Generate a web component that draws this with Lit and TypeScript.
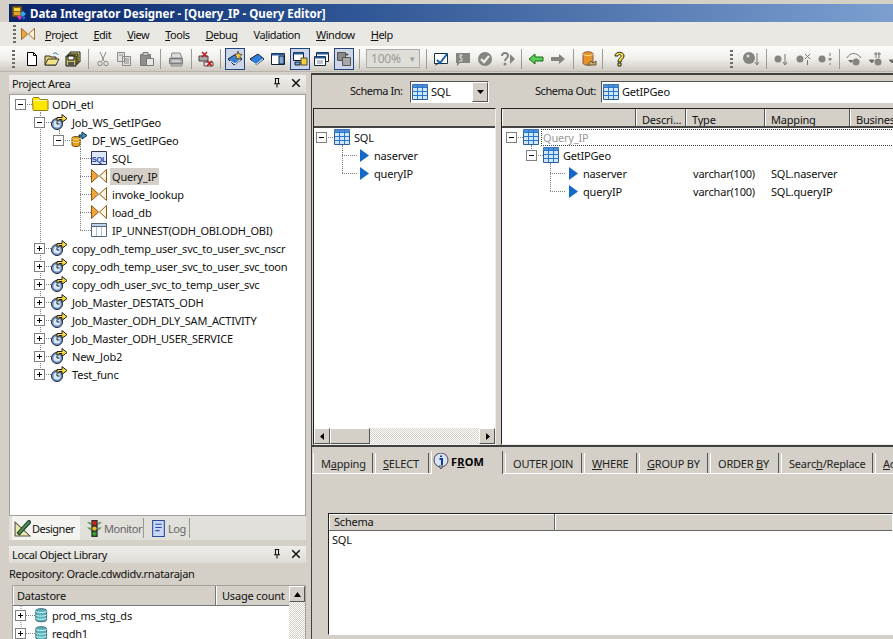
import { LitElement, html, css, svg } from 'lit';
import { customElement } from 'lit/decorators.js';

// small 16x16 icon fragments
const I: Record<string, unknown> = {
  app: svg`<path d="M1 1h10v11H1z" fill="#8a6a20" stroke="#3a2a10"/><path d="M3 3h6v3H3z" fill="#f4d840"/><path d="M3 7h6v3H3z" fill="#e8a020"/><path d="M9 9l3-3 3 3-3 3z" fill="#2fa8e8"/><path d="M6 12l2-2 3 2-2 3z" fill="#d838c8"/><path d="M11 12l2-1 2 2-3 2z" fill="#2a58c8"/>`,
  doc: svg`<path d="M3.500 1.500h6l3 3v10h-9z" fill="#fff" stroke="#000"/><path d="M9.500 1.500v3h3" fill="none" stroke="#000"/>`,
  open: svg`<path d="M1 14V5h5l1 1h5v8z" fill="#e8d070" stroke="#333"/><path d="M1 14l3-6h11l-3 6z" fill="#f4e48c" stroke="#333"/><path d="M9 3c2-2 4-1 5 1" fill="none" stroke="#16a"/>`,
  saveall: svg`<path d="M5 1h10v10H5z" fill="#d8d070" stroke="#222"/><path d="M3 3h10v10H3z" fill="#a09a40" stroke="#222"/><path d="M1 5h10v10H1z" fill="#c8c060" stroke="#111"/><path d="M3 5h6v4H3z" fill="#fff" stroke="#111"/><path d="M3 11h6v4H3z" fill="#555"/>`,
  cut: svg`<path d="M5 1l4 9M11 1L7 10" stroke="#8a8a8a" fill="none"/><circle cx="5" cy="12.500" r="2.200" fill="none" stroke="#8a8a8a"/><circle cx="11" cy="12.500" r="2.200" fill="none" stroke="#8a8a8a"/>`,
  copy: svg`<path d="M1.500 1.500h7v9h-7zM6.500 5.500h8v9h-8z" fill="#e0dfda" stroke="#8a8a8a"/><path d="M8 8h5M8 10h5M8 12h5M3 4h4" stroke="#8a8a8a"/>`,
  paste: svg`<path d="M1.500 3.500h10v11h-10z" fill="#8e8e8a" stroke="#777"/><path d="M4 1.500h5v3H4z" fill="#ccc" stroke="#777"/><path d="M7.500 7.500h7v7h-7z" fill="#e8e8e4" stroke="#777"/>`,
  print: svg`<path d="M4 2h8l2 5H3z" fill="#ddd" stroke="#888"/><path d="M1.500 7.500h13v5h-13z" fill="#aaa" stroke="#777"/><path d="M3 13h11v2H3z" fill="#ccc" stroke="#888"/><path d="M4 10h8" stroke="#eee"/>`,
  del: svg`<path d="M1 5h9v5H1z" fill="#aaa" stroke="#444"/><path d="M6 11h9v4H6z" fill="#ddd" stroke="#555"/><path d="M4 1l5 5M9 1L4 6M9 10l5 5M14 10l-5 5" stroke="#c01818" stroke-width="1.600"/>`,
  star: svg`<path d="M1 8l8-5 6 5-8 6z" fill="#3a7fd0" stroke="#123"/><path d="M3 10l5 3 6-5" fill="none" stroke="#fff"/><path d="M11 0l1 3 3 .5-2 2 .5 3-2.500-1.500-2 1.500.5-3-2-2 3-.5z" fill="#f6d040" stroke="#654"/>`,
  book: svg`<path d="M1 8l8-5 6 5-8 6z" fill="#2f7fd8" stroke="#123"/><path d="M2 10l5 3.500 7-5.500" fill="none" stroke="#fff"/>`,
  win1: svg`<path d="M1.500 2.500h13v11h-13z" fill="#fff" stroke="#123"/><path d="M1.500 2.500h13v2h-13z" fill="#2a5a9a"/><path d="M9 5h5v8H9z" fill="#7fa8d8" stroke="#123"/>`,
  win2: svg`<path d="M1.500 1.500h10v8h-10z" fill="#fff" stroke="#123"/><path d="M1.500 1.500h10v2h-10z" fill="#2a5a9a"/><path d="M9 7h6v7H9z" fill="#f0d040" stroke="#543"/><path d="M3 11h5v3H3z" fill="#7fa8d8" stroke="#123"/>`,
  win3: svg`<path d="M2.500 1.500h12v9h-12z" fill="#fff" stroke="#123"/><path d="M2.500 1.500h12v2h-12z" fill="#2a5a9a"/><path d="M.5 5.500h11v9H.5z" fill="#fff" stroke="#123"/><path d="M.5 5.500h11v2H.5z" fill="#2a5a9a"/><path d="M3 10h6M3 12h6" stroke="#789"/>`,
  win4: svg`<path d="M1.500 1.500h8v8h-8z" fill="#8a8a8a" stroke="#555"/><path d="M6.500 6.500h8v8h-8z" fill="#a8a8a8" stroke="#555"/><path d="M11 2v3M9.500 3.500h3" stroke="#555"/>`,
  note: svg`<path d="M1.500 2.500h13v10h-13z" fill="#fff" stroke="#134"/><path d="M4 9l3 3 7-9" fill="none" stroke="#1a5f9a" stroke-width="2"/><path d="M3 13l-1 2 3-2" fill="#333"/>`,
  book5: svg`<path d="M1 2h14v10H5l-3 3v-3H1z" fill="#858580"/><path d="M4 4h3v1H5v2h2v3H4" fill="none" stroke="#ddd"/>`,
  check: svg`<circle cx="8" cy="8" r="7" fill="#858580"/><path d="M4 8l3 3 5-6" fill="none" stroke="#eee" stroke-width="2.200"/>`,
  qplay: svg`<path d="M3 5c0-4 6-4 6 0 0 2-3 2-3 5" fill="none" stroke="#858580" stroke-width="2"/><circle cx="6" cy="13" r="1.500" fill="#858580"/><path d="M11 3l5 5-5 5z" fill="#858580"/>`,
  back: svg`<path d="M1 8l6-5v3h8v4H7v3z" fill="#58d058" stroke="#1a6a1a"/>`,
  fwd: svg`<path d="M15 8L9 3v3H1v4h8v3z" fill="#858580"/>`,
  dbw: svg`<path d="M2 3c0-3 10-3 10 0v9c0 3-10 3-10 0z" fill="#e8922c" stroke="#854"/><path d="M2 3c0 2 10 2 10 0" fill="none" stroke="#fd8"/><path d="M7 13l3-3 2 2 3-2v4H7z" fill="#c9b060" stroke="#654"/>`,
  help: svg`<path d="M4 5c0-5 9-5 9 0 0 3-3 3-3 6H7c0-4 3-4 3-6s-3-2-3 0z" fill="#f6e23c" stroke="#222"/><path d="M7 12h3v3H7z" fill="#f6e23c" stroke="#222"/>`,
  ballDown: svg`<circle cx="6" cy="7" r="6" fill="#858580"/><circle cx="5" cy="5" r="1.500" fill="#ddd"/><path d="M14 2v11M12 11l2 3 2-3" fill="none" stroke="#777"/>`,
  dotDown: svg`<circle cx="5" cy="8" r="3.500" fill="#858580"/><path d="M12 3v10M10 11l2 3 2-3" fill="none" stroke="#777"/>`,
  dotX: svg`<circle cx="4" cy="8" r="3.500" fill="#858580"/><path d="M9 3l5 5M14 3L9 8M11.500 9v5" fill="none" stroke="#777"/>`,
  dotLine: svg`<circle cx="5" cy="8" r="3.500" fill="#858580"/><path d="M13 2v3M13 7v3M13 12v2M11 8h4" fill="none" stroke="#777"/>`,
  curve: svg`<path d="M1 7c3-6 10-6 14 0" fill="none" stroke="#777"/><circle cx="10" cy="11" r="3.500" fill="#858580"/><path d="M2 9h5l-2 3z" fill="#666"/>`,
  hash: svg`<circle cx="11" cy="11" r="3.500" fill="#858580"/><path d="M2 9h5l-2 3zM9 1v6M12 1v6M7 3h7" fill="#666" stroke="#777"/>`,
  folder: svg`<path d="M.5 3.500c0-2 1-2 2-2h4c1 0 1 2 2 2h6.500c1 0 1 1 1 1v9c0 1-1 1-1 1h-13c-1 0-1-1-1-1z" fill="#ffe600" stroke="#8a7a20"/><path d="M1.500 4.500h13" stroke="#fff9b0"/>`,
  job: svg`<circle cx="6" cy="10" r="5.500" fill="#6f9bd0" stroke="#223"/><circle cx="6" cy="10" r="3.500" fill="#dce8f6"/><path d="M6 7.500V10h2.500" fill="none" stroke="#123"/><path d="M6 7V3.500h5V.5l5 4-5 4v-3H8V7z" fill="#f8d838" stroke="#222"/>`,
  flow: svg`<path d="M1 6c0-2 8-2 8 0v7c0 2-8 2-8 0z" fill="#e8a020" stroke="#6a4a10"/><path d="M1 9c0 2 8 2 8 0M1 6c0 2 8 2 8 0" fill="none" stroke="#fbe08a"/><path d="M8 3h3V0l5 3.500-5 3.500V5H8z" fill="#3f8fd0" stroke="#134"/>`,
  sql: svg`<path d="M.5 1.500h15v13H.5z" fill="#dce8f8" stroke="#335"/><text x="8" y="11.500" text-anchor="middle" font-family="Liberation Sans" font-weight="700" font-size="7.500" letter-spacing="-.3" fill="#1838a8">SQL</text>`,
  query: svg`<path d="M.5 1.500L7.500 8l-7 6.500z" fill="#f2a63a" stroke="#8a5a18"/><path d="M15.500 1.500L8.500 8l7 6.500z" fill="#fff4dc" stroke="#8a5a18"/>`,
  unnest: svg`<path d="M.5 1.500h15v13H.5z" fill="#fff" stroke="#567"/><path d="M.5 1.500h15v3H.5z" fill="#bcd4ee" stroke="#567"/><path d="M5.500 5v9M10.500 5v9" stroke="#a8c0d8"/>`,
  table: svg`<path d="M.5 .5h15v15H.5z" fill="#cfe6fb" stroke="#2a5f9a"/><path d="M.5 .5h15v3H.5z" fill="#4f8fd8"/><path d="M1 3.500h14M1 7.500h14M1 11.500h14M5.500 1v14M10.500 1v14" stroke="#2a78cc"/>`,
  tri: svg`<path d="M3 2l9 6.500-9 6.500z" fill="#1668c8"/>`,
  db: svg`<path d="M2 3c0-3 12-3 12 0v10c0 3-12 3-12 0z" fill="#5ab0b8" stroke="#2a5a70"/><path d="M2 3.500c0 2 12 2 12 0M2 7.500c0 2 12 2 12 0M2 11c0 2 12 2 12 0" fill="none" stroke="#dff"/>`,
  designer: svg`<path d="M1 2v13h14z" fill="#efe7a8" stroke="#554"/><path d="M3 12L14 0l2 2L5 14z" fill="#4a9a3a" stroke="#234"/>`,
  light: svg`<path d="M5 0h6v16H5z" fill="#333"/><circle cx="8" cy="3" r="2" fill="#d02020"/><circle cx="8" cy="8" r="2" fill="#e8c020"/><circle cx="8" cy="13" r="2" fill="#30a030"/><path d="M1 2h3l1 3zM15 2h-3l-1 3zM1 7h3l1 3zM15 7h-3l-1 3z" fill="#3a8a3a"/>`,
  log: svg`<path d="M2.500 .5h11v15h-11z" fill="#c8d8f4" stroke="#2a4a9a"/><path d="M5 4h6M5 7h6M5 10h4" stroke="#2a4a9a"/>`,
  info: svg`<circle cx="8" cy="7" r="7" fill="#dbe3f0" stroke="#445"/><path d="M6 13h4l-2 3z" fill="#dbe3f0" stroke="#445"/><path d="M6.500 6H9v5h1M8 2.500v1.500" fill="none" stroke="#123a9a" stroke-width="2"/>`,
  pin: svg`<path d="M5 2h6M6 2v7M10 2v7M4 9h8M8 9v5" fill="none" stroke="#111" stroke-width="1.400"/>`,
  close: svg`<path d="M3 3l10 10M13 3L3 13" fill="none" stroke="#111" stroke-width="2"/>`,
};

const icon = (n: string, size = 16) =>
  html`<svg class="ic" width=${size} height=${size} viewBox="0 0 16 16">${I[n]}</svg>`;

type Row = { l: number; label: string; icon: string; exp?: string; sel?: boolean; type?: string; map?: string; ghost?: boolean };
type Cfg = { ox: number; end: number; exp: number[]; hub: number[]; icon: number[]; label: number[]; size: number; spans: number[][]; typeX?: number; mapX?: number };

const TOOLS: [string, number, boolean?][] = [
  ['doc', 21], ['open', 20], ['saveall', 21], ['|', 10], ['cut', 19], ['copy', 24], ['paste', 22], ['|', 4],
  ['print', 27], ['|', 4], ['del', 25], ['|', 4], ['star', 26, true], ['book', 18], ['win1', 24], ['win2', 20, true],
  ['win3', 24], ['win4', 20, true], ['|', 10], ['combo', 58], ['|', 8], ['note', 22], ['book5', 22], ['check', 21],
  ['qplay', 23], ['|', 6], ['back', 23], ['fwd', 22], ['|', 8], ['dbw', 23], ['|', 4], ['help', 30],
];
const TOOLS2: [string, number, boolean?][] = [
  ['ballDown', 24], ['|', 6], ['dotDown', 24], ['dotX', 22], ['dotLine', 20], ['|', 8], ['curve', 22], ['hash', 20], ['hash', 20],
];

const PROJECT: Row[] = [
  { l: 0, label: 'ODH_etl', icon: 'folder', exp: '-' },
  { l: 1, label: 'Job_WS_GetIPGeo', icon: 'job', exp: '-' },
  { l: 2, label: 'DF_WS_GetIPGeo', icon: 'flow', exp: '-' },
  { l: 3, label: 'SQL', icon: 'sql' },
  { l: 3, label: 'Query_IP', icon: 'query', sel: true },
  { l: 3, label: 'invoke_lookup', icon: 'query' },
  { l: 3, label: 'load_db', icon: 'query' },
  { l: 3, label: 'IP_UNNEST(ODH_OBI.ODH_OBI)', icon: 'unnest' },
  ...[
    'copy_odh_temp_user_svc_to_user_svc_nscr', 'copy_odh_temp_user_svc_to_user_svc_toon', 'copy_odh_user_svc_to_temp_user_svc',
    'Job_Master_DESTATS_ODH', 'Job_Master_ODH_DLY_SAM_ACTIVITY', 'Job_Master_ODH_USER_SERVICE', 'New_Job2', 'Test_func',
  ].map((label) => ({ l: 1, label, icon: 'job', exp: '+' })),
];
const PROJECT_CFG: Cfg = {
  ox: 10, end: 112, size: 16,
  exp: [21, 40, 59], hub: [0, 40, 59, 80], icon: [32, 51, 71, 91], label: [52, 72, 92, 112],
  spans: [[40, 0, 15], [59, 1, 2], [80, 2, 7]],
};
const IN_ROWS: Row[] = [
  { l: 0, label: 'SQL', icon: 'table', exp: '-' },
  { l: 1, label: 'naserver', icon: 'tri' },
  { l: 1, label: 'queryIP', icon: 'tri' },
];
const IN_CFG: Cfg = {
  ox: 314, end: 374, size: 16,
  exp: [322], hub: [0, 342], icon: [334, 357], label: [354, 374], spans: [[342, 0, 2]],
};
const OUT_ROWS: Row[] = [
  { l: 0, label: 'Query_IP', icon: 'table', exp: '-', ghost: true },
  { l: 1, label: 'GetIPGeo', icon: 'table', exp: '-' },
  { l: 2, label: 'naserver', icon: 'tri', type: 'varchar(100)', map: 'SQL.naserver' },
  { l: 2, label: 'queryIP', icon: 'tri', type: 'varchar(100)', map: 'SQL.queryIP' },
];
const OUT_CFG: Cfg = {
  ox: 502, end: 583, size: 16,
  exp: [512, 532], hub: [0, 531, 550], icon: [523, 543, 566], label: [543, 563, 583],
  spans: [[531, 0, 1], [550, 1, 3]], typeX: 693, mapX: 771,
};

const TABS: [unknown, number, boolean?][] = [
  [html`M<u>a</u>pping`, 60], [html`<u>S</u>ELECT`, 54], [html`${icon('info', 16)}<b>F<u>R</u>OM</b>`, 72, true],
  [html`OUTER <u>J</u>OIN`, 77], [html`<u>W</u>HERE`, 53], [html`<u>G</u>ROUP BY`, 69], [html`ORDER <u>B</u>Y`, 69],
  [html`Searc<u>h</u>/Replace`, 92], [html`<u>A</u>dvanced`, 80],
];

function expander(x: number, kind: string) {
  return svg`<rect x=${x - 5.5} y="4.5" width="10" height="10" fill="#fff" stroke="#808080"/>
    <path d="M${x - 3} 9.500h5" stroke="#000"/>${kind === '+' ? svg`<path d="M${x - 0.5} 7v5" stroke="#000"/>` : ''}`;
}

function treeRow(r: Row, i: number, c: Cfg) {
  const labelX = c.label[r.l];
  const iconX = c.icon[r.l];
  const w = labelX - c.ox;
  const lines = c.spans
    .filter(([, a, b]) => i >= a && i <= b)
    .map(([x, a, b]) => svg`<path d="M${x + 0.5} ${i === a ? 9 : 0}V${i === b ? 9.5 : 18}" stroke="#808080" stroke-dasharray="1 1"/>`);
  const hubX = r.exp ? c.exp[r.l] : c.hub[r.l];
  return html`<div class="row">
    <svg class="guides" width=${w} height="18" viewBox="${c.ox} 0 ${w} 18">
      ${lines}
      <path d="M${hubX} 9.500H${iconX}" stroke="#808080" stroke-dasharray="1 1"/>
      ${r.exp ? expander(c.exp[r.l], r.exp) : ''}
      <g transform="translate(${iconX} 1)">${I[r.icon]}</g>
    </svg>
    <span class="lbl ${r.sel ? 'sel' : ''} ${r.ghost ? 'ghost' : ''}"
      style=${r.type ? `width:${c.typeX! - labelX + 2}px` : ''}>${r.label}</span>
    ${r.type ? html`<span class="cell" style="width:${c.mapX! - c.typeX!}px">${r.type}</span><span class="cell">${r.map}</span>` : ''}
  </div>`;
}

const tree = (rows: Row[], c: Cfg) => rows.map((r, i) => treeRow(r, i, c));

function toolbar(items: [string, number, boolean?][]) {
  return items.map(([n, w, pressed]) => {
    const st = `width:${w}px`;
    if (n === '|') return html`<span class="tsep" style=${st}></span>`;
    if (n === 'combo') return html`<span class="tcell" style=${st}><span class="zoom">100%<i>▾</i></span></span>`;
    return html`<span class="tcell" style=${st}><span class="tbtn ${pressed ? 'on' : ''}">${icon(n)}</span></span>`;
  });
}

const sbBtn = (d: string) => html`<span class="sbbtn"><svg width="7" height="7" viewBox="0 0 7 7"><path d=${d} fill="#000"/></svg></span>`;
const dockHead = (t: string) => html`<div class="dock"><b>${t}</b><span class="acts">${icon('pin', 12)}${icon('close', 12)}</span></div>`;

@customElement('app-root')
export class AppRoot extends LitElement {
  static styles = css`
    :host {
      display: block;
      width: 893px;
      height: 639px;
      overflow: hidden;
      background: #d4d0c8;
      font: 11px 'Noto Sans', sans-serif;
      letter-spacing: -0.2px;
      color: #111;
    }
    .title {
      height: 18px;
      margin: 4px 0 0 9px;
      display: flex;
      align-items: center;
      gap: 3px;
      background: linear-gradient(90deg, #0a246a, #244b8c 30%, #7c9fd0 100%);
      color: #fff;
      font-weight: 700;
      font-size: 11.5px;
      letter-spacing: 0;
      white-space: nowrap;
    }
    .title svg { margin-left: 2px; }
    .menu {
      height: 24px;
      display: flex;
      align-items: center;
      padding-left: 13px;
      background: #e9e8e3;
      letter-spacing: -0.5px;
    }
    .menu .grip { margin-right: 5px; }
    .menu span { margin-right: 16px; white-space: nowrap; }
    .tools {
      height: 26px;
      display: flex;
      align-items: center;
      padding-left: 12px;
      background: linear-gradient(#fdfdfc, #f0efeb 50%, #cfcbc3);
      border-bottom: 1px solid #b8b4ac;
      box-sizing: border-box;
      overflow: hidden;
    }
    .grip {
      width: 3px;
      height: 18px;
      flex: none;
      background: repeating-linear-gradient(#6f6f6a 0 2px, transparent 2px 4px);
    }
    .tools > .grip { margin-right: 6px; }
    .spacer { width: 96px; flex: none; }
    .tcell { display: flex; justify-content: center; flex: none; }
    .tbtn {
      display: flex;
      align-items: center;
      justify-content: center;
      width: 20px;
      height: 22px;
      box-sizing: border-box;
    }
    .tbtn.on { background: #cdd6e8; border: 1px solid #24457c; }
    .tsep { flex: none; height: 20px; background: linear-gradient(#9a9a96, #9a9a96) center/1px 100% no-repeat; }
    .ic { display: block; flex: none; }
    .zoom {
      width: 54px;
      height: 19px;
      box-sizing: border-box;
      border: 1px solid #aaa;
      display: flex;
      align-items: center;
      justify-content: space-between;
      padding: 0 4px;
      color: #9a9a96;
      font-size: 12px;
      background: #e0ded8;
    }
    .zoom i { font-style: normal; font-size: 9px; }
    .main { display: flex; height: 567px; }
    .left { width: 310px; flex: none; box-sizing: border-box; padding: 3px 4px 0 9px; }
    .dock {
      height: 17px;
      display: flex;
      align-items: center;
      justify-content: space-between;
      margin: 0 0 2px 0;
      padding: 0 4px 1px 3px;
      box-sizing: border-box;
      background: linear-gradient(#efeeea, #dedcd6);
    }
    .dock b { font-weight: 400; letter-spacing: -0.35px; }
    .dock .acts { display: flex; gap: 7px; align-items: center; }
    .treebox {
      height: 422px;
      box-sizing: border-box;
      background: #fff;
      border: 1px solid #a4a19a;
      overflow: hidden;
    }
    .row { display: flex; align-items: center; height: 18px; white-space: nowrap; }
    .guides { flex: none; }
    .lbl { padding: 0 2px; margin-left: -2px; box-sizing: border-box; flex: none; line-height: 17px; }
    .lbl.sel { background: #d4d0c8; }
    .lbl.ghost { color: #999; flex: 1; margin-right: 0; outline: 1px dotted #444; outline-offset: -1px; }
    .cell { flex: none; }
    .dtabs { display: flex; height: 24px; margin: 0 0 6px 0; background: #e2e0da; letter-spacing: -0.5px; }
    .dtab { display: flex; align-items: center; gap: 1px; padding: 0 2px; color: #666; box-sizing: border-box; flex: none; border-right: 1px solid #999; margin: 2px 4px 2px 0; }
    .dtab.on { color: #111; background: #f4f3ef; border-right: none; margin: 0 4px 0 3px; }
    .repo { height: 17px; line-height: 17px; margin: 2px 0 3px 0; white-space: nowrap; letter-spacing: -0.3px; }
    .list {
      margin-left: 3px;
      background: #fff;
      border: 1px solid #a4a19a;
      display: grid;
      grid-template-columns: 1fr 16px;
      height: 60px;
      overflow: hidden;
    }
    .lhead { display: flex; height: 19px; background: #d4d0c8; border-bottom: 1px solid #777; white-space: nowrap; }
    .lhead span { padding: 2px 4px; border-right: 1px solid #777; box-shadow: inset 1px 0 #fff; }
    .lhead span:first-child { width: 194px; flex: none; }
    .lhead span:last-child { flex: 1; border-right: none; padding-left: 6px; }
    .librow { display: flex; align-items: center; height: 18px; }
    .vtrack, .htrack {
      background: repeating-conic-gradient(#fff 0 25%, #d4d0c8 0 50%) 0 0/2px 2px;
    }
    .sbbtn {
      display: flex;
      align-items: center;
      justify-content: center;
      background: #d4d0c8;
      box-sizing: border-box;
      width: 16px;
      height: 16px;
      flex: none;
      border: 1px solid;
      border-color: #fff #555 #555 #fff;
    }
    .right { flex: 1; min-width: 0; border-left: 1px solid #404040; margin-left: 1px; border-top: 2px solid #404040; margin-top: 1px; display: flex; flex-direction: column; }
    .upper { height: 372px; display: flex; flex: none; border-bottom: 2px solid #404040; box-sizing: border-box; padding-left: 1px; }
    .pane { display: flex; flex-direction: column; flex: none; }
    .pane.in { width: 183px; }
    .pane.out { width: 400px; margin-left: 5px; }
    .schema { height: 33px; display: flex; align-items: center; flex: none; white-space: nowrap; }
    .schema > b { font-weight: 400; margin-bottom: 3px; letter-spacing: -0.45px; flex: none; }
    .in .schema { padding-left: 37px; }
    .in .schema > b { width: 60px; }
    .out .schema { padding-left: 34px; }
    .out .schema > b { width: 66px; }
    .pick {
      display: flex;
      align-items: center;
      gap: 3px;
      background: #fff;
      height: 22px;
      box-sizing: border-box;
      border: 1px solid #555;
      border-color: #555 #fff #fff #555;
      padding-left: 1px;
    }
    .in .pick { width: 79px; }
    .out .pick { flex: 1; }
    .pick .sbbtn { margin-left: auto; height: 20px; }
    .box {
      flex: 1;
      display: flex;
      flex-direction: column;
      background: #fff;
      border: 1px solid;
      border-color: #222 #eee #eee #222;
      min-height: 0;
    }
    .colhead { height: 17px; flex: none; display: flex; background: #d4d0c8; border-bottom: 2px solid #444; box-sizing: content-box; }
    .colhead span { box-sizing: border-box; padding: 3px 5px 0; border-left: 1px solid #fff; border-right: 1px solid #555; white-space: nowrap; overflow: hidden; flex: none; }
    .rows { flex: 1; min-height: 0; }
    .hbar { display: flex; height: 16px; flex: none; }
    .hbar .thumb { width: 40px; background: #d4d0c8; border: 1px solid; border-color: #fff #555 #555 #fff; box-sizing: border-box; flex: none; }
    .htrack { flex: 1; }
    .lower { flex: 1; min-height: 0; overflow: hidden; padding-top: 5px; }
    .tabs { display: flex; align-items: flex-end; height: 21px; padding-left: 1px; gap: 2px; border-bottom: 1px solid #fff; }
    .tab {
      flex: none;
      display: flex;
      align-items: center;
      height: 20px;
      box-sizing: border-box;
      padding-left: 7px;
      border-left: 1px solid #fff;
      border-right: 1px solid #555;
      white-space: pre;
      color: #222;
    }
    .tab.on {
      height: 23px;
      margin-bottom: -1px;
      padding-top: 2px;
      align-items: flex-start;
      background: #d4d0c8;
      color: #000;
      gap: 2px;
      padding-left: 1px;
    }
    .tab b { line-height: 17px; letter-spacing: .2px; }
    .grid { margin: 39px 0 0 16px; background: #fff; height: 120px; border: 1px solid; border-color: #222 transparent transparent #222; }
    .ghead { display: flex; height: 16px; background: #d4d0c8; border-bottom: 1px solid #666; }
    .ghead span { width: 226px; flex: none; padding-left: 5px; box-sizing: border-box; border-right: 1px solid #666; box-shadow: inset 1px 1px #fff; line-height: 15px; }
    .ghead em { flex: 1; box-shadow: inset 1px 1px #fff; }
    .gcell { padding: 1px 3px; }
    u { text-underline-offset: 1px; }
  `;

  render() {
    const menu = ['Project', 'Edit', 'View', 'Tools', 'Debug', 'Validation', 'Window', 'Help'];
    const keys = [0, 0, 0, 0, 0, 2, 0, 0];
    return html`
      <div class="title">${icon('app', 16)}<span>Data Integrator Designer - [Query_IP - Query Editor]</span></div>
      <div class="menu">
        <i class="grip"></i>${icon('query', 14)}<i style="width:10px"></i>
        ${menu.map((m, i) => html`<span>${m.slice(0, keys[i])}<u>${m[keys[i]]}</u>${m.slice(keys[i] + 1)}</span>`)}
      </div>
      <div class="tools">
        <i class="grip"></i>${toolbar(TOOLS)}<i class="spacer"></i>
        <i class="grip"></i>${toolbar(TOOLS2)}
      </div>
      <div class="main">
        <div class="left">
          ${dockHead('Project Area')}
          <div class="treebox">${tree(PROJECT, PROJECT_CFG)}</div>
          <div class="dtabs">
            <span class="dtab on" style="width:68px">${icon('designer', 17)}Designer</span>
            <span class="dtab" style="width:60px">${icon('light', 17)}Monitor</span>
            <span class="dtab" style="width:42px">${icon('log', 17)}Log</span>
          </div>
          ${dockHead('Local Object Library')}
          <div class="repo">Repository: Oracle.cdwdidv.rnatarajan</div>
          <div class="list">
            <div>
              <div class="lhead"><span>Datastore</span><span>Usage count</span></div>
              ${['prod_ms_stg_ds', 'regdh1'].map((n) => html`<div class="librow">
                <svg width="39" height="18" viewBox="13 0 39 18">
                  <path d="M21 0V18" stroke="#808080" stroke-dasharray="1 1"/>
                  <path d="M26 9.500H35" stroke="#808080" stroke-dasharray="1 1"/>
                  ${expander(21, '+')}<g transform="translate(34 2) scale(.9)">${I.db}</g>
                </svg><span>${n}</span></div>`)}
            </div>
            <div class="vtrack">${sbBtn('M3.500 1L7 6H0z')}</div>
          </div>
        </div>
        <div class="right">
          <div class="upper">
            <div class="pane in">
              <div class="schema"><b>Schema In:</b>
                <span class="pick">${icon('table')}<span>SQL</span>${sbBtn('M0 2h7L3.500 6z')}</span>
              </div>
              <div class="box">
                <div class="colhead"></div>
                <div class="rows">${tree(IN_ROWS, IN_CFG)}</div>
                <div class="hbar">${sbBtn('M5 0v7L1 3.500z')}<span class="thumb"></span><span class="htrack"></span>${sbBtn('M2 0v7l4-3.500z')}</div>
              </div>
            </div>
            <div class="pane out">
              <div class="schema"><b>Schema Out:</b>
                <span class="pick">${icon('table')}<span>GetIPGeo</span></span>
              </div>
              <div class="box">
                <div class="colhead">
                  <span style="width:134px"></span><span style="width:50px">Descri...</span><span style="width:79px">Type</span>
                  <span style="width:85px">Mapping</span><span style="width:52px">Business</span>
                </div>
                <div class="rows">${tree(OUT_ROWS, OUT_CFG)}</div>
              </div>
            </div>
          </div>
          <div class="lower">
            <div class="tabs">
              ${TABS.map(([t, w, on]) => html`<span class="tab ${on ? 'on' : ''}" style="width:${w}px"><span style="display:contents">${t}</span></span>`)}
            </div>
            <div class="grid">
              <div class="ghead"><span>Schema</span><em></em></div>
              <div class="gcell">SQL</div>
            </div>
          </div>
        </div>
      </div>
    `;
  }
}
